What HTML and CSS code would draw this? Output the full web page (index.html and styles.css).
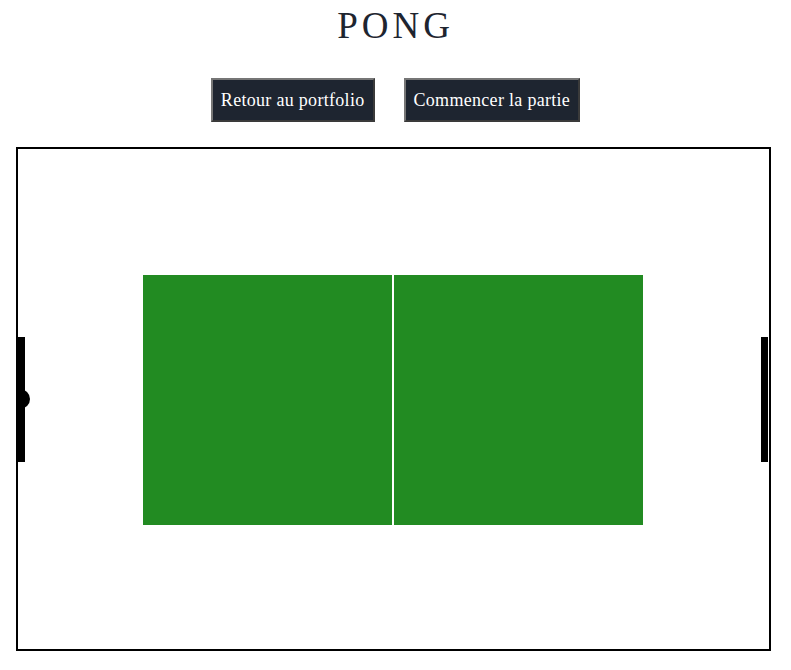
FILE: index.html
```html
<!DOCTYPE html>
<html lang="fr">
<head>
<meta charset="utf-8">
<title>Pong</title>
<link rel="stylesheet" href="styles.css">
</head>
<body>
<h1 class="title">PONG</h1>
<div class="actions">
  <button class="btn">Retour au portfolio</button>
  <button class="btn">Commencer la partie</button>
</div>
<div class="board-wrap">
  <svg class="board" width="751" height="500" viewBox="0 0 751 500">
    <rect x="125" y="126" width="500" height="250" fill="#228b22"/>
    <rect x="374" y="126" width="2" height="250" fill="#ffffff"/>
    <rect x="0" y="188" width="7" height="125" fill="#000"/>
    <circle cx="2" cy="250" r="10" fill="#000"/>
    <rect x="743" y="188" width="7" height="125" fill="#000"/>
  </svg>
</div>
</body>
</html>
```
FILE: styles.css
```css
html, body {
  margin: 0;
  padding: 0;
  background: #ffffff;
}
body {
  font-family: "Liberation Serif", serif;
  color: #1e2530;
}
.title {
  margin: 0;
  padding-top: 6px;
  height: 72px;
  box-sizing: border-box;
  text-align: center;
  font-weight: normal;
  font-size: 37px;
  line-height: 40px;
  letter-spacing: 4px;
}
.actions {
  display: flex;
  justify-content: center;
  gap: 29px;
  padding-top: 6px;
  height: 75px;
  box-sizing: border-box;
}
.btn {
  height: 44px;
  padding: 0 8px;
  background: #1e2530;
  color: #ffffff;
  border: 2px solid;
  border-color: #767676 #3a3a3a #3a3a3a #767676;
  font-family: "Liberation Serif", serif;
  font-size: 18px;
  letter-spacing: 0.3px;
}
.board-wrap {
  padding-left: 16px;
}
.board {
  display: block;
  border: 2px solid #000;
  overflow: hidden;
}
```
